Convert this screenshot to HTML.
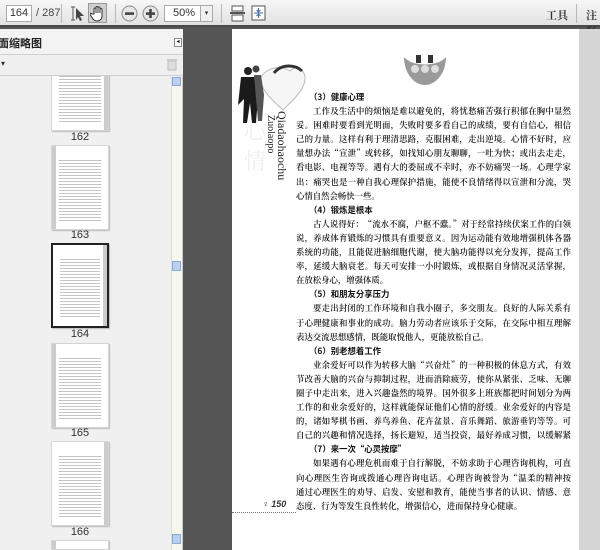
<!DOCTYPE html>
<html><head><meta charset="utf-8"><style>
*{margin:0;padding:0;box-sizing:border-box}
html,body{width:600px;height:550px;overflow:hidden}
body{background:#565656;font-family:"Liberation Sans","Noto Sans CJK SC",sans-serif;position:relative}
.tb{position:absolute;left:0;top:0;width:600px;height:27px;background:linear-gradient(#f7f7f7,#e2e2e2);border-bottom:2px solid #4a4a4a}
.ab{position:absolute}
.inp{border:1px solid #a9a9a9;background:#fff;font-size:11px;color:#333}
.sep{position:absolute;top:4px;width:1px;height:19px;background:#b8b8b8}
.panel{position:absolute;left:0;top:29px;width:183px;height:521px;background:#f0f0f0;overflow:hidden}
.clip{position:absolute;left:0;top:76px;width:171px;height:474px;overflow:hidden}
.thumb{position:absolute;left:51px;width:58px;height:85px;background:#fff;border:1px solid #d5d5d5;box-shadow:1px 1px 1px #bbb}
.thumb .t{position:absolute;left:7px;right:7px;top:12px;bottom:8px;background:repeating-linear-gradient(#fff 0 2px,#c4c4c4 2px 3px)}
.thumb .s{position:absolute;top:0;bottom:0;width:4px;background:#ccc}
.lbl{position:absolute;left:51px;width:58px;text-align:center;font-size:11px;color:#333}
.page{position:absolute;left:232px;top:29px;width:368px;height:521px;background:#fff;overflow:hidden}
.strip{position:absolute;right:0;top:0;width:21px;height:521px;background:#d6d6d6}
.tx{position:absolute;left:64px;width:275px;font-family:"Noto Serif CJK SC","Liberation Serif",serif;font-size:8.4px;line-height:14.1px;color:#111;font-weight:600}
.tx div{height:14.1px;text-align:justify;text-align-last:justify;overflow:hidden}
.tx .i{padding-left:17px}
.tx .l{text-align-last:left}
.tx .h{padding-left:13px;text-align-last:left;font-weight:bold;font-family:"Noto Sans CJK SC",sans-serif}
</style></head><body>
<div class="tb">
 <div class="ab inp" style="left:6px;top:5px;width:26px;height:17px;text-align:center;line-height:15px">164</div>
 <div class="ab" style="left:36px;top:7px;font-size:11px;color:#444">/ 287</div>
 <div class="sep" style="left:61px"></div>
 <svg class="ab" style="left:69px;top:5px" width="16" height="17"><path d="M2 2h4M4 2v13M2 15h4" stroke="#555" fill="none"/><path d="M7 3l8 8h-4l2 4-2 1-2-4-2 3z" fill="#444"/></svg>
 <div class="ab" style="left:88px;top:3px;width:19px;height:20px;background:#cfcfcf;border:1px solid #999"></div>
 <svg class="ab" style="left:90px;top:5px" width="16" height="17"><path d="M4 9V4a1 1 0 012 0v4V2.5a1 1 0 012 0V8V3a1 1 0 012 0v5V4.5a1 1 0 012 0V11c0 3-2 5-5 5s-4-2-6-5l-1-2c0-1 1-1 2 0z" fill="#fff" stroke="#333" stroke-width="1"/></svg>
 <div class="sep" style="left:115px"></div>
 <svg class="ab" style="left:121px;top:5px" width="17" height="17"><circle cx="8.5" cy="8.5" r="7.5" fill="#e6e6e6" stroke="#8a8a8a"/><rect x="4" y="7.3" width="9" height="2.6" fill="#444"/></svg>
 <svg class="ab" style="left:142px;top:5px" width="17" height="17"><circle cx="8.5" cy="8.5" r="7.5" fill="#e6e6e6" stroke="#8a8a8a"/><rect x="4" y="7.3" width="9" height="2.6" fill="#444"/><rect x="7.2" y="4" width="2.6" height="9" fill="#444"/></svg>
 <div class="ab inp" style="left:164px;top:5px;width:37px;height:17px;text-align:right;padding-right:5px;line-height:15px">50%</div>
 <div class="ab" style="left:200px;top:5px;width:13px;height:17px;border:1px solid #a9a9a9;background:#f0f0f0;font-size:7px;text-align:center;line-height:15px;color:#333">▾</div>
 <div class="sep" style="left:221px"></div>
 <svg class="ab" style="left:230px;top:5px" width="16" height="17"><rect x="2" y="1" width="11" height="5" fill="#fff" stroke="#555"/><rect x="2" y="10" width="11" height="6" fill="#fff" stroke="#555"/><rect x="0" y="7" width="15" height="2" fill="#555"/></svg>
 <svg class="ab" style="left:251px;top:5px" width="16" height="17"><rect x="1" y="1" width="13" height="14" fill="#fff" stroke="#555"/><path d="M7.5 3v4M5.5 5l2 2 2-2M7.5 13V9M5.5 11l2-2 2 2M3 8h9" stroke="#3a6ea5" fill="none"/></svg>
 <div class="ab" style="left:546px;top:7px;font-size:11px;color:#333;font-family:'Noto Serif CJK SC',serif;font-weight:bold">工具</div>
 <div class="sep" style="left:576px"></div>
 <div class="ab" style="left:586px;top:7px;font-size:11px;color:#333;font-family:'Noto Serif CJK SC',serif;font-weight:bold">注释</div>
</div>
<div class="panel">
 <div class="ab" style="left:0;top:0;width:183px;height:26px;background:#f3f3f3;border-bottom:1px solid #cfcfcf"></div>
 <div class="ab" style="left:-2px;top:6px;font-size:11px;font-weight:bold;color:#222">面缩略图</div>
 <div class="ab" style="left:174px;top:9px;width:8px;height:9px;border:1px solid #888;background:#fff;font-size:6px;line-height:7px;text-align:center">◂</div>
 <div class="ab" style="left:0;top:27px;width:183px;height:20px;background:#efefef;border-bottom:1px solid #cfcfcf"></div>
 <div class="ab" style="left:1px;top:30px;font-size:8px;color:#333">▾</div>
 <svg class="ab" style="left:167px;top:29px" width="10" height="13"><rect x="1" y="3" width="8" height="9" fill="#ddd" stroke="#bbb"/><rect x="0" y="1" width="10" height="2" fill="#ccc"/></svg>
 <div class="ab" style="left:171px;top:48px;width:11px;height:473px;background:#f7f7f0;border-left:1px solid #ddd"></div>
 <div class="ab" style="left:172px;top:48px;width:9px;height:9px;background:#b9d0ee;border:1px solid #8aa9d6"></div>
 <div class="ab" style="left:172px;top:232px;width:9px;height:10px;background:#b9d0ee;border:1px solid #8aa9d6"></div>
 <div class="ab" style="left:172px;top:505px;width:9px;height:10px;background:#b9d0ee;border:1px solid #8aa9d6"></div>
 <div class="ab" style="left:182px;top:48px;width:2px;height:473px;background:#c8c8c8"></div>
</div>
<div class="clip">
 <div class="thumb" style="top:-30px"><div class="t"></div><div class="s" style="right:0"></div></div>
 <div class="lbl" style="top:55px">162</div>
 <div class="thumb" style="top:69px"><div class="t"></div><div class="s" style="left:0"></div></div>
 <div class="lbl" style="top:153px">163</div>
 <div class="thumb" style="top:167px;border:2px solid #222"><div class="t"></div><div class="s" style="right:0"></div></div>
 <div class="lbl" style="top:252px">164</div>
 <div class="thumb" style="top:267px"><div class="t"></div><div class="s" style="left:0"></div></div>
 <div class="lbl" style="top:351px">165</div>
 <div class="thumb" style="top:365px"><div class="t"></div><div class="s" style="right:0"></div></div>
 <div class="lbl" style="top:450px">166</div>
 <div class="thumb" style="top:464px;height:10px"><div class="s" style="left:0"></div></div>
</div>

<div class="page">
 <div class="strip"></div>
 <svg class="ab" style="left:0;top:0" width="120" height="200">
  <text x="12" y="110" font-size="22" fill="#eee" font-family="Noto Serif CJK SC">心</text>
  <text x="12" y="140" font-size="22" fill="#eee" font-family="Noto Serif CJK SC">情</text>
  <path d="M28 50c6-12 20-14 30-8 6-6 14-2 15 6 1 12-13 24-22 33-9-8-20-17-23-31z" fill="#f6f6f6" stroke="#bbb"/>
  <path d="M42 44c8-10 22-8 28-2" stroke="#333" stroke-width="3" fill="none"/>
  <circle cx="16" cy="42" r="4" fill="#222"/><circle cx="24" cy="40" r="3.5" fill="#444"/>
  <path d="M9 48h15l2 20-2 26h-4l-2-20-3 20h-4l1-24-6 6z" fill="#1a1a1a"/>
  <path d="M22 46h7l3 20-2 26h-4z" fill="#555"/>
  <text transform="translate(46,82) rotate(90)" font-family="Liberation Serif" font-size="12" fill="#222">Qiadaohaochu</text>
  <text transform="translate(36,86) rotate(90)" font-family="Liberation Serif" font-size="10" fill="#222">Zuolaopo</text>
 </svg>
 <svg class="ab" style="left:168px;top:24px" width="50" height="34"><path d="M4 4c0 16 10 28 21 28S46 20 46 4c-8 10-34 10-42 0z" fill="#9a9a9a"/><rect x="16" y="2" width="5" height="8" fill="#333"/><rect x="28" y="2" width="5" height="8" fill="#333"/><circle cx="15" cy="16" r="4" fill="#ddd"/><circle cx="25" cy="16" r="4" fill="#ddd"/><circle cx="35" cy="16" r="4" fill="#ddd"/></svg>
 <div class="tx" style="top:61px">
  <div class="h">（3）健康心理</div>
  <div class="i">工作及生活中的烦恼是难以避免的，将忧愁痛苦强行积郁在胸中显然不</div>
  <div>妥。困难时要看到光明面，失败时要多看自己的成绩，要有自信心，相信自</div>
  <div>己的力量。这样有利于理清思路，克服困难，走出逆境。心情不好时，应尽</div>
  <div>量想办法“宣泄”或转移，如找知心朋友聊聊，一吐为快；或出去走走，看</div>
  <div>看电影、电视等等。遇有大的委屈或不幸时，亦不妨痛哭一场。心理学家指</div>
  <div>出：痛哭也是一种自我心理保护措施，能使不良情绪得以宣泄和分流，哭后</div>
  <div class="l">心情自然会畅快一些。</div>
  <div class="h">（4）锻炼是根本</div>
  <div class="i">古人说得好：“流水不腐，户枢不蠹。”对于经常持续伏案工作的白领来</div>
  <div>说，养成体育锻炼的习惯具有重要意义。因为运动能有效地增强机体各器官、</div>
  <div>系统的功能，且能促进脑细胞代谢，使大脑功能得以充分发挥，提高工作效</div>
  <div>率，延缓大脑衰老。每天可安排一小时锻炼，或根据自身情况灵活掌握，旨</div>
  <div class="l">在放松身心，增强体质。</div>
  <div class="h">（5）和朋友分享压力</div>
  <div class="i">要走出封闭的工作环境和自我小圈子，多交朋友。良好的人际关系有益</div>
  <div>于心理健康和事业的成功。脑力劳动者应该乐于交际，在交际中相互理解和</div>
  <div class="l">表达交流思想感情，既能取悦他人，更能放松自己。</div>
  <div class="h">（6）别老想着工作</div>
  <div class="i">业余爱好可以作为转移大脑“兴奋灶”的一种积极的休息方式，有效地调</div>
  <div>节改善大脑的兴奋与抑制过程，进而消除疲劳，使你从紧张、乏味、无聊的小</div>
  <div>圈子中走出来，进入兴趣盎然的境界。国外很多上班族都把时间划分为两块：</div>
  <div>工作的和业余爱好的，这样就能保证他们心情的舒缓。业余爱好的内容是广泛</div>
  <div>的，诸如琴棋书画、养鸟养鱼、花卉盆景、音乐舞蹈、旅游垂钓等等。可根据</div>
  <div>自己的兴趣和情况选择，扬长避短，适当投资，最好养成习惯，以缓解紧张感。</div>
  <div class="h">（7）来一次“心灵按摩”</div>
  <div class="i">如果遇有心理危机而难于自行解脱，不妨求助于心理咨询机构，可直接</div>
  <div>向心理医生咨询或拨通心理咨询电话。心理咨询被誉为“温柔的精神按摩”，</div>
  <div>通过心理医生的劝导、启发、安慰和教育，能使当事者的认识、情感、意志、</div>
  <div class="l">态度、行为等发生良性转化，增强信心，进而保持身心健康。</div>
 </div>
 <div class="ab" style="left:30px;top:470px;font-size:9px;font-style:italic;font-weight:bold;color:#333;font-family:'Liberation Sans',sans-serif">♀ 150</div>
 <div class="ab" style="left:0;top:483px;width:64px;border-top:1px dotted #777"></div>
</div>
</body></html>
